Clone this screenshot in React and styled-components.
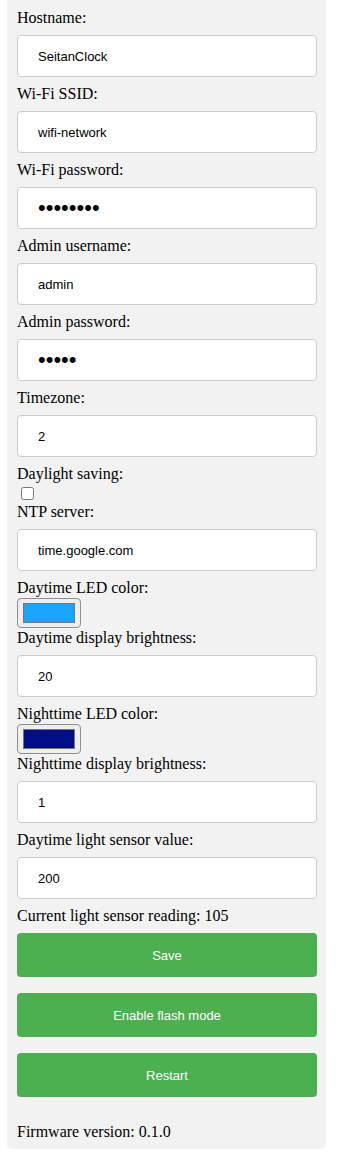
import React from 'react';
import styled, { createGlobalStyle } from 'styled-components';

const GlobalStyle = createGlobalStyle`
  body {
    margin: 0;
    background: #fff;
    font-family: "Liberation Serif", "Times New Roman", serif;
  }
`;

const Panel = styled.form`
  box-sizing: border-box;
  width: 319px;
  margin-left: 7px;
  padding: 9px 9px 8px 10px;
  background: #f2f2f2;
  border-radius: 0 0 5px 5px;
  font-size: 16px;
  color: #000;
`;

const Label = styled.label`
  display: block;
  line-height: 18px;
`;

const TextInput = styled.input`
  display: block;
  box-sizing: border-box;
  width: 100%;
  height: 42px;
  margin: 8px 0;
  padding: 0 20px;
  border: 1px solid #ccc;
  border-radius: 4px;
  background: #fff;
  color: #000;
  font-family: "Liberation Sans", Arial, sans-serif;
  font-size: ${p => (p.type === 'password' ? '22px' : '13px')};
  outline: none;
`;

const Checkbox = styled.input`
  display: block;
  width: 13px;
  height: 13px;
  margin: 4px 3px 3px 4px;
`;

const ColorInput = styled.input`
  display: block;
  box-sizing: border-box;
  width: 64px;
  height: 30px;
  margin: 1px 0;
  padding: 4px 5px;
  border: 1px solid #8f8f8f;
  border-radius: 4px;
  background: #efefef;
  cursor: pointer;

  &::-webkit-color-swatch-wrapper {
    padding: 0;
  }
  &::-webkit-color-swatch {
    border: 1px solid #777;
    border-radius: 0;
  }
`;

const Reading = styled.div`
  line-height: 18px;
`;

const ButtonGroup = styled.div`
  display: flex;
  flex-direction: column;
  gap: 16px;
  margin-top: 8px;
`;

const Button = styled.button`
  box-sizing: border-box;
  width: 100%;
  height: 44px;
  padding: 0 20px;
  border: none;
  border-radius: 4px;
  background: #4caf50;
  color: #fff;
  font-family: "Liberation Sans", Arial, sans-serif;
  font-size: 13px;
  cursor: pointer;
`;

const Firmware = styled.p`
  margin: 26px 0 0;
  line-height: 18px;
`;

const textFields = [
  { id: 'hostname', label: 'Hostname:', value: 'SeitanClock' },
  { id: 'ssid', label: 'Wi-Fi SSID:', value: 'wifi-network' },
  { id: 'wifipass', label: 'Wi-Fi password:', value: 'password', type: 'password' },
  { id: 'adminuser', label: 'Admin username:', value: 'admin' },
  { id: 'adminpass', label: 'Admin password:', value: 'admin', type: 'password' },
  { id: 'timezone', label: 'Timezone:', value: '2' },
];

function Field({ id, label, value, type = 'text' }) {
  return (
    <>
      <Label htmlFor={id}>{label}</Label>
      <TextInput id={id} type={type} defaultValue={value} />
    </>
  );
}

export default function App() {
  return (
    <>
      <GlobalStyle />
      <Panel onSubmit={e => e.preventDefault()}>
        {textFields.map(f => (
          <Field key={f.id} {...f} />
        ))}

        <Label htmlFor="dst">Daylight saving:</Label>
        <Checkbox id="dst" type="checkbox" />

        <Field id="ntp" label="NTP server:" value="time.google.com" />

        <Label htmlFor="daycolor">Daytime LED color:</Label>
        <ColorInput id="daycolor" type="color" defaultValue="#1ba4fc" />
        <Field id="daybright" label="Daytime display brightness:" value="20" />

        <Label htmlFor="nightcolor">Nighttime LED color:</Label>
        <ColorInput id="nightcolor" type="color" defaultValue="#000d86" />
        <Field id="nightbright" label="Nighttime display brightness:" value="1" />

        <Field id="sensor" label="Daytime light sensor value:" value="200" />

        <Reading>Current light sensor reading: 105</Reading>

        <ButtonGroup>
          <Button type="submit">Save</Button>
          <Button type="button">Enable flash mode</Button>
          <Button type="button">Restart</Button>
        </ButtonGroup>

        <Firmware>Firmware version: 0.1.0</Firmware>
      </Panel>
    </>
  );
}
